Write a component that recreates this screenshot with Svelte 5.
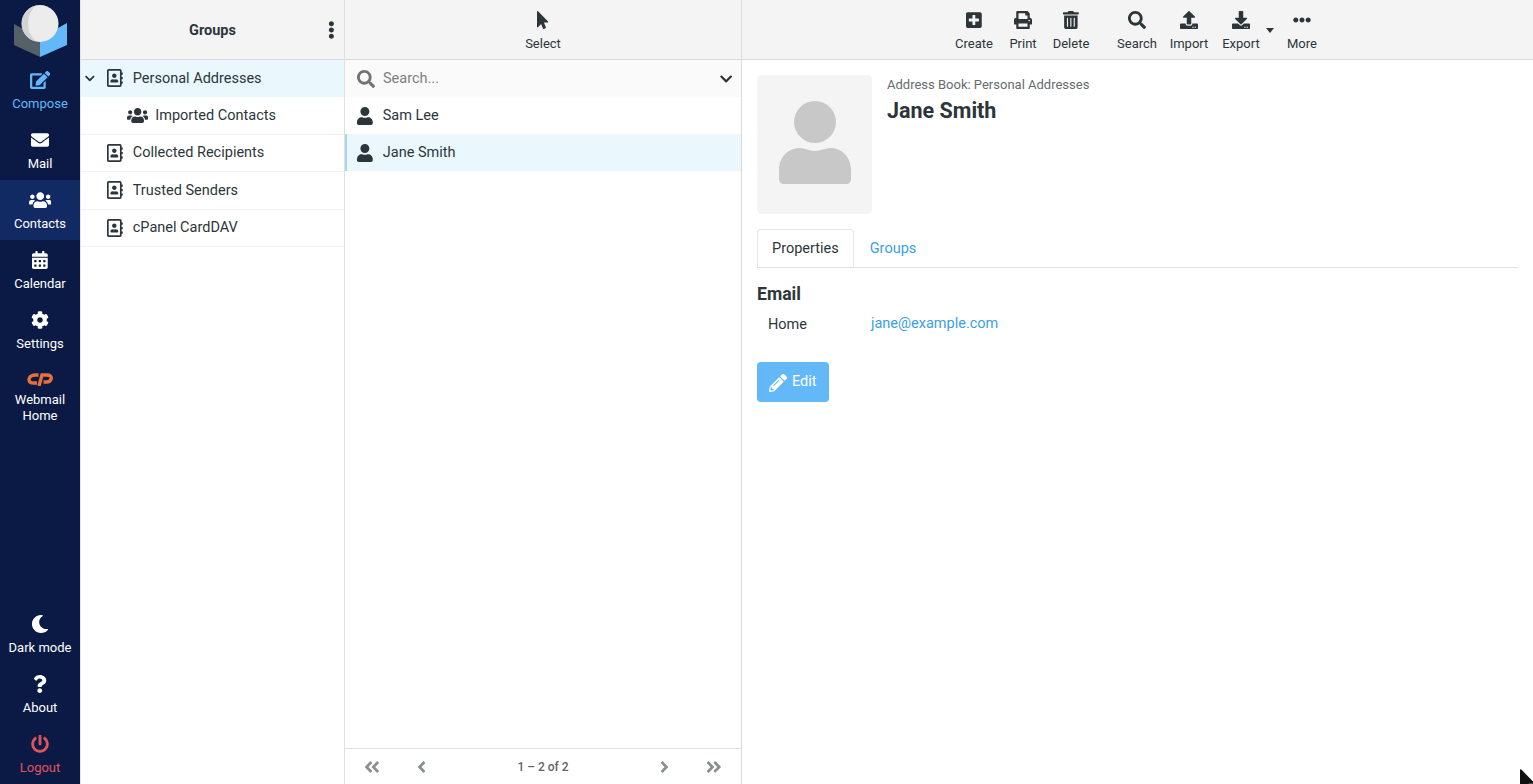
<script>
	// font awesome 5 solid paths, same set the elastic skin uses
	const icons = {
		edit: ['0 0 576 512', 'M402.6 83.2l90.2 90.2c3.8 3.8 3.8 10 0 13.8L274.4 405.6l-92.8 10.3c-12.4 1.4-22.9-9.1-21.5-21.5l10.3-92.8L388.8 83.2c3.8-3.8 10-3.8 13.8 0zm162-22.9l-48.8-48.8c-15.2-15.2-39.9-15.2-55.2 0l-35.4 35.4c-3.8 3.8-3.8 10 0 13.8l90.2 90.2c3.8 3.8 10 3.8 13.8 0l35.4-35.4c15.2-15.3 15.2-40 0-55.2zM384 346.2V448H64V128h229.8c3.2 0 6.2-1.3 8.5-3.5l40-40c7.6-7.6 2.2-20.5-8.5-20.5H48C21.5 64 0 85.5 0 112v352c0 26.5 21.5 48 48 48h352c26.5 0 48-21.5 48-48V306.2c0-10.7-12.9-16-20.5-8.5l-40 40c-2.2 2.3-3.5 5.3-3.5 8.5z'],
		envelope: ['0 0 512 512', 'M502.3 190.8c3.9-3.1 9.7-.2 9.7 4.7V400c0 26.5-21.5 48-48 48H48c-26.5 0-48-21.5-48-48V195.6c0-5 5.7-7.8 9.7-4.7 22.4 17.4 52.1 39.5 154.1 113.6 21.1 15.4 56.7 47.8 92.2 47.6 35.7.3 72-32.8 92.3-47.6 102-74.1 131.6-96.3 154-113.7zM256 320c23.2.4 56.6-29.2 73.4-41.4 132.7-96.3 142.8-104.7 173.4-128.7 5.8-4.5 9.2-11.5 9.2-18.9v-19c0-26.5-21.5-48-48-48H48C21.5 64 0 85.5 0 112v19c0 7.4 3.4 14.3 9.2 18.9 30.6 23.9 40.7 32.4 173.4 128.7 16.8 12.2 50.2 41.8 73.4 41.4z'],
		users: ['0 0 640 512', 'M96 224c35.3 0 64-28.7 64-64s-28.7-64-64-64-64 28.7-64 64 28.7 64 64 64zm448 0c35.3 0 64-28.7 64-64s-28.7-64-64-64-64 28.7-64 64 28.7 64 64 64zm32 32h-64c-17.6 0-33.5 7.1-45.1 18.6 40.3 22.1 68.9 62 75.1 109.4h66c17.7 0 32-14.3 32-32v-32c0-35.3-28.7-64-64-64zm-256 0c61.9 0 112-50.1 112-112S381.9 32 320 32 208 82.1 208 144s50.1 112 112 112zm76.8 32h-8.3c-20.8 10-43.9 16-68.5 16s-47.6-6-68.5-16h-8.3C179.6 288 128 339.6 128 403.2V432c0 26.5 21.5 48 48 48h288c26.5 0 48-21.5 48-48v-28.8c0-63.6-51.6-115.2-115.2-115.2zm-223.7-13.4C161.5 263.1 145.6 256 128 256H64c-35.3 0-64 28.7-64 64v32c0 17.7 14.3 32 32 32h65.9c6.3-47.4 34.9-87.3 75.2-109.4z'],
		calendar: ['0 0 448 512', 'M0 464c0 26.5 21.5 48 48 48h352c26.5 0 48-21.5 48-48V192H0v272zm320-196c0-6.6 5.4-12 12-12h40c6.6 0 12 5.4 12 12v40c0 6.6-5.4 12-12 12h-40c-6.6 0-12-5.4-12-12v-40zm0 128c0-6.6 5.4-12 12-12h40c6.6 0 12 5.4 12 12v40c0 6.6-5.4 12-12 12h-40c-6.6 0-12-5.4-12-12v-40zM192 268c0-6.6 5.4-12 12-12h40c6.6 0 12 5.4 12 12v40c0 6.6-5.4 12-12 12h-40c-6.6 0-12-5.4-12-12v-40zm0 128c0-6.6 5.4-12 12-12h40c6.6 0 12 5.4 12 12v40c0 6.6-5.4 12-12 12h-40c-6.6 0-12-5.4-12-12v-40zM64 268c0-6.6 5.4-12 12-12h40c6.6 0 12 5.4 12 12v40c0 6.6-5.4 12-12 12H76c-6.6 0-12-5.4-12-12v-40zm0 128c0-6.6 5.4-12 12-12h40c6.6 0 12 5.4 12 12v40c0 6.6-5.4 12-12 12H76c-6.6 0-12-5.4-12-12v-40zM400 64h-48V16c0-8.8-7.2-16-16-16h-32c-8.8 0-16 7.2-16 16v48H160V16c0-8.8-7.2-16-16-16h-32c-8.8 0-16 7.2-16 16v48H48C21.5 64 0 85.5 0 112v48h448v-48c0-26.5-21.5-48-48-48z'],
		cog: ['0 0 512 512', 'M487.4 315.7l-42.6-24.6c4.3-23.2 4.3-47 0-70.2l42.6-24.6c4.9-2.8 7.1-8.6 5.5-14-11.1-35.6-30-67.8-54.7-94.6-3.8-4.1-10-5.1-14.8-2.3L380.8 110c-17.9-15.4-38.5-27.3-60.8-35.1V25.8c0-5.6-3.9-10.5-9.4-11.7-36.7-8.2-74.3-7.8-109.2 0-5.5 1.2-9.4 6.1-9.4 11.7V75c-22.2 7.9-42.8 19.8-60.8 35.1L88.7 85.5c-4.9-2.8-11-1.9-14.8 2.3-24.7 26.7-43.6 58.9-54.7 94.6-1.7 5.4.6 11.2 5.5 14L67.3 221c-4.3 23.2-4.3 47 0 70.2l-42.6 24.6c-4.9 2.8-7.1 8.6-5.5 14 11.1 35.6 30 67.8 54.7 94.6 3.8 4.1 10 5.1 14.8 2.3l42.6-24.6c17.9 15.4 38.5 27.3 60.8 35.1v49.2c0 5.6 3.9 10.5 9.4 11.7 36.7 8.2 74.3 7.8 109.2 0 5.5-1.2 9.4-6.1 9.4-11.7v-49.2c22.2-7.9 42.8-19.8 60.8-35.1l42.6 24.6c4.9 2.8 11 1.9 14.8-2.3 24.7-26.7 43.6-58.9 54.7-94.6 1.5-5.5-.7-11.3-5.6-14.1zM256 336c-44.1 0-80-35.9-80-80s35.9-80 80-80 80 35.9 80 80-35.9 80-80 80z'],
		moon: ['0 0 512 512', 'M283.211 512c78.962 0 151.079-35.925 198.857-94.792 7.068-8.708-.639-21.43-11.562-19.35-124.203 23.654-238.262-71.576-238.262-196.954 0-72.222 38.662-138.635 101.498-174.394 9.686-5.512 7.25-20.197-3.756-22.23A258.156 258.156 0 0 0 283.211 0c-141.309 0-256 114.511-256 256 0 141.309 114.511 256 256 256z'],
		question: ['0 0 384 512', 'M202.021 0C122.202 0 70.503 32.703 29.914 91.026c-7.363 10.58-5.093 25.086 5.178 32.874l43.138 32.709c10.373 7.865 25.132 6.026 33.253-4.148 25.049-31.381 43.63-49.449 82.757-49.449 30.764 0 68.816 19.799 68.816 49.631 0 22.552-18.617 34.134-48.993 51.164-35.423 19.86-82.299 44.576-82.299 106.405V320c0 13.255 10.745 24 24 24h72.471c13.255 0 24-10.745 24-24v-5.773c0-42.86 125.268-44.645 125.268-160.627C377.504 66.256 286.902 0 202.021 0zM192 373.459c-38.196 0-69.271 31.075-69.271 69.271 0 38.195 31.075 69.27 69.271 69.27s69.271-31.075 69.271-69.271-31.075-69.27-69.271-69.27z'],
		power: ['0 0 512 512', 'M400 54.1c63 45 104 118.6 104 201.9 0 136.8-110.8 247.7-247.5 248C120 504.3 8.2 393 8 256.4 7.9 173.1 48.9 99.3 111.8 54.2c11.7-8.3 28-4.8 35 7.7L162.6 90c5.9 10.5 3.1 23.8-6.6 31-41.5 30.8-68 79.6-68 134.9-.1 92.3 74.5 168.1 168 168.1 91.6 0 168.6-74.2 168-169.1-.3-51.8-24.7-101.8-68.1-134-9.7-7.2-12.4-20.5-6.5-30.9l15.8-28.1c7-12.4 23.2-16.1 34.8-7.8zM296 264V24c0-13.3-10.7-24-24-24h-32c-13.3 0-24 10.7-24 24v240c0 13.3 10.7 24 24 24h32c13.3 0 24-10.7 24-24z'],
		pointer: ['0 0 320 512', 'M302.189 329.126H196.105l55.831 135.993c3.889 9.428-.555 19.999-9.444 23.999l-49.165 21.427c-9.165 4-19.443-.571-23.332-9.714l-53.053-129.136-86.664 89.138C18.729 472.71 0 463.554 0 447.977V18.299C0 1.899 19.921-6.096 30.277 5.443l284.412 292.542c11.472 11.179 3.007 31.141-12.5 31.141z'],
		plus: ['0 0 448 512', 'M400 32H48C21.5 32 0 53.5 0 80v352c0 26.5 21.5 48 48 48h352c26.5 0 48-21.5 48-48V80c0-26.5-21.5-48-48-48zm-32 252c0 6.6-5.4 12-12 12h-92v92c0 6.6-5.4 12-12 12h-56c-6.6 0-12-5.4-12-12v-92H92c-6.6 0-12-5.4-12-12v-56c0-6.6 5.4-12 12-12h92v-92c0-6.6 5.4-12 12-12h56c6.6 0 12 5.4 12 12v92h92c6.6 0 12 5.4 12 12v56z'],
		print: ['0 0 512 512', 'M448 192V77.25c0-8.49-3.37-16.62-9.37-22.63L393.37 9.37c-6-6-14.14-9.37-22.63-9.37H96C78.33 0 64 14.33 64 32v160c-35.35 0-64 28.65-64 64v112c0 8.84 7.16 16 16 16h48v96c0 17.67 14.33 32 32 32h320c17.67 0 32-14.33 32-32v-96h48c8.84 0 16-7.16 16-16V256c0-35.35-28.65-64-64-64zm-64 256H128v-96h256v96zm0-224H128V64h192v48c0 8.84 7.16 16 16 16h48v96zm48 72c-13.25 0-24-10.75-24-24 0-13.26 10.75-24 24-24s24 10.74 24 24c0 13.25-10.75 24-24 24z'],
		trash: ['0 0 448 512', 'M32 464a48 48 0 0 0 48 48h288a48 48 0 0 0 48-48V128H32zm272-256a16 16 0 0 1 32 0v224a16 16 0 0 1-32 0zm-96 0a16 16 0 0 1 32 0v224a16 16 0 0 1-32 0zm-96 0a16 16 0 0 1 32 0v224a16 16 0 0 1-32 0zM432 32H312l-9.4-18.7A24 24 0 0 0 281.1 0H166.8a23.72 23.72 0 0 0-21.4 13.3L136 32H16A16 16 0 0 0 0 48v32a16 16 0 0 0 16 16h416a16 16 0 0 0 16-16V48a16 16 0 0 0-16-16z'],
		search: ['0 0 512 512', 'M505 442.7L405.3 343c-4.5-4.5-10.6-7-17-7H372c27.6-35.3 44-79.7 44-128C416 93.1 322.9 0 208 0S0 93.1 0 208s93.1 208 208 208c48.3 0 92.7-16.4 128-44v16.3c0 6.4 2.5 12.5 7 17l99.7 99.7c9.4 9.4 24.6 9.4 33.9 0l28.3-28.3c9.4-9.4 9.4-24.6.1-34zM208 336c-70.7 0-128-57.2-128-128 0-70.7 57.2-128 128-128 70.7 0 128 57.2 128 128 0 70.7-57.2 128-128 128z'],
		upload: ['0 0 512 512', 'M296 384h-80c-13.3 0-24-10.7-24-24V192h-87.7c-17.8 0-26.7-21.5-14.1-34.1L242.3 5.7c7.5-7.5 19.8-7.5 27.3 0l152.2 152.2c12.6 12.6 3.7 34.1-14.1 34.1H320v168c0 13.3-10.7 24-24 24zm216-8v112c0 13.3-10.7 24-24 24H24c-13.3 0-24-10.7-24-24V376c0-13.3 10.7-24 24-24h136v8c0 30.9 25.1 56 56 56h80c30.9 0 56-25.1 56-56v-8h136c13.3 0 24 10.7 24 24zm-124 88c0-11-9-20-20-20s-20 9-20 20 9 20 20 20 20-9 20-20zm64 0c0-11-9-20-20-20s-20 9-20 20 9 20 20 20 20-9 20-20z'],
		download: ['0 0 512 512', 'M216 0h80c13.3 0 24 10.7 24 24v168h87.7c17.8 0 26.7 21.5 14.1 34.1L269.7 378.3c-7.5 7.5-19.8 7.5-27.3 0L90.1 226.1c-12.6-12.6-3.7-34.1 14.1-34.1H192V24c0-13.3 10.7-24 24-24zm296 376v112c0 13.3-10.7 24-24 24H24c-13.3 0-24-10.7-24-24V376c0-13.3 10.7-24 24-24h146.7l49 49c20.1 20.1 52.5 20.1 72.6 0l49-49H488c13.3 0 24 10.7 24 24zm-124 88c0-11-9-20-20-20s-20 9-20 20 9 20 20 20 20-9 20-20zm64 0c0-11-9-20-20-20s-20 9-20 20 9 20 20 20 20-9 20-20z'],
		dots: ['0 0 512 512', 'M328 256c0 39.8-32.2 72-72 72s-72-32.2-72-72 32.2-72 72-72 72 32.2 72 72zm104-72c-39.8 0-72 32.2-72 72s32.2 72 72 72 72-32.2 72-72-32.2-72-72-72zm-352 0c-39.8 0-72 32.2-72 72s32.2 72 72 72 72-32.2 72-72-32.2-72-72-72z'],
		dotsv: ['0 0 192 512', 'M96 184c39.8 0 72 32.2 72 72s-32.2 72-72 72-72-32.2-72-72 32.2-72 72-72zM24 80c0 39.8 32.2 72 72 72s72-32.2 72-72S135.8 8 96 8 24 40.2 24 80zm0 352c0 39.8 32.2 72 72 72s72-32.2 72-72-32.2-72-72-72-72 32.2-72 72z'],
		user: ['0 0 448 512', 'M224 256c70.7 0 128-57.3 128-128S294.7 0 224 0 96 57.3 96 128s57.3 128 128 128zm89.6 32h-16.7c-22.2 10.2-46.9 16-72.9 16s-50.6-5.8-72.9-16h-16.7C60.2 288 0 348.2 0 422.4V464c0 26.5 21.5 48 48 48h352c26.5 0 48-21.5 48-48v-41.6c0-74.2-60.2-134.4-134.4-134.4z'],
		chevron: ['0 0 448 512', 'M207.029 381.476L12.686 187.132c-9.373-9.373-9.373-24.569 0-33.941l22.667-22.667c9.357-9.357 24.522-9.375 33.901-.04L224 284.505l154.745-154.021c9.379-9.335 24.544-9.317 33.901.04l22.667 22.667c9.373 9.373 9.373 24.569 0 33.941L240.971 381.476c-9.373 9.372-24.569 9.372-33.942 0z'],
		left: ['0 0 256 512', 'M31.7 239l136-136c9.4-9.4 24.6-9.4 33.9 0l22.6 22.6c9.4 9.4 9.4 24.6 0 33.9L127.9 256l96.4 96.4c9.4 9.4 9.4 24.6 0 33.9L201.7 409c-9.4 9.4-24.6 9.4-33.9 0l-136-136c-9.5-9.4-9.5-24.6-.1-34z'],
		right: ['0 0 256 512', 'M224.3 273l-136 136c-9.4 9.4-24.6 9.4-33.9 0l-22.6-22.6c-9.4-9.4-9.4-24.6 0-33.9l96.4-96.4-96.4-96.4c-9.4-9.4-9.4-24.6 0-33.9L54.3 103c9.4-9.4 24.6-9.4 33.9 0l136 136c9.5 9.4 9.5 24.6.1 34z'],
		first: ['0 0 448 512', 'M223.7 239l136-136c9.4-9.4 24.6-9.4 33.9 0l22.6 22.6c9.4 9.4 9.4 24.6 0 33.9L319.9 256l96.4 96.4c9.4 9.4 9.4 24.6 0 33.9L393.7 409c-9.4 9.4-24.6 9.4-33.9 0l-136-136c-9.5-9.4-9.5-24.6-.1-34zm-192 34l136 136c9.4 9.4 24.6 9.4 33.9 0l22.6-22.6c9.4-9.4 9.4-24.6 0-33.9L127.9 256l96.4-96.4c9.4-9.4 9.4-24.6 0-33.9L201.7 103c-9.4-9.4-24.6-9.4-33.9 0l-136 136c-9.5 9.4-9.5 24.6-.1 34z'],
		last: ['0 0 448 512', 'M224.3 273l-136 136c-9.4 9.4-24.6 9.4-33.9 0l-22.6-22.6c-9.4-9.4-9.4-24.6 0-33.9l96.4-96.4-96.4-96.4c-9.4-9.4-9.4-24.6 0-33.9L54.3 103c9.4-9.4 24.6-9.4 33.9 0l136 136c9.5 9.4 9.5 24.6.1 34zm192-34l-136-136c-9.4-9.4-24.6-9.4-33.9 0l-22.6 22.6c-9.4 9.4-9.4 24.6 0 33.9l96.4 96.4-96.4 96.4c-9.4 9.4-9.4 24.6 0 33.9l22.6 22.6c9.4 9.4 24.6 9.4 33.9 0l136-136c9.4-9.2 9.4-24.4 0-33.8z'],
		book: ['0 0 448 512', 'M436 160c6.6 0 12-5.4 12-12v-40c0-6.6-5.4-12-12-12h-20V48c0-26.5-21.5-48-48-48H48C21.5 0 0 21.5 0 48v416c0 26.5 21.5 48 48 48h320c26.5 0 48-21.5 48-48v-48h20c6.6 0 12-5.4 12-12v-40c0-6.6-5.4-12-12-12h-20v-64h20c6.6 0 12-5.4 12-12v-40c0-6.6-5.4-12-12-12h-20v-64h20zm-68 304H48V48h320v416zM208 256c35.3 0 64-28.7 64-64s-28.7-64-64-64-64 28.7-64 64 28.7 64 64 64zm-89.6 128h179.2c12.4 0 22.4-8.6 22.4-19.2v-19.2c0-31.8-30.1-57.6-67.2-57.6-10.8 0-18.7 8-44.8 8-26.9 0-33.4-8-44.8-8-37.1 0-67.2 25.8-67.2 57.6v19.2c0 10.6 10 19.2 22.4 19.2z'],
		pencil: ['0 0 512 512', 'M497.9 142.1l-46.1 46.1c-4.7 4.7-12.3 4.7-17 0l-111-111c-4.7-4.7-4.7-12.3 0-17l46.1-46.1c18.7-18.7 49.1-18.7 67.9 0l60.1 60.1c18.8 18.7 18.8 49.1 0 67.9zM284.2 99.8L21.6 362.4.4 483.9c-2.9 16.4 11.4 30.6 27.8 27.8l121.5-21.3 262.6-262.6c4.7-4.7 4.7-12.3 0-17l-111-111c-4.8-4.7-12.4-4.7-17.1 0zM124.1 339.9c-5.5-5.5-5.5-14.3 0-19.8l154-154c5.5-5.5 14.3-5.5 19.8 0s5.5 14.3 0 19.8l-154 154c-5.5 5.5-14.3 5.5-19.8 0zM88 424h48v36.3l-64.5 11.3-31.1-31.1L51.7 376H88v48z']
	};

	const navTop = [
		{ icon: 'edit', label: 'Compose', cls: 'compose' },
		{ icon: 'envelope', label: 'Mail' },
		{ icon: 'users', label: 'Contacts', cls: 'active' },
		{ icon: 'calendar', label: 'Calendar' },
		{ icon: 'cog', label: 'Settings' }
	];
	const navBottom = [
		{ icon: 'moon', label: 'Dark mode' },
		{ icon: 'question', label: 'About' },
		{ icon: 'power', label: 'Logout', cls: 'logout' }
	];
	const books = ['Collected Recipients', 'Trusted Senders', 'cPanel CardDAV'];
	const contacts = [
		{ name: 'Sam Lee', selected: false },
		{ name: 'Jane Smith', selected: true }
	];
	const tools = [
		{ icon: 'plus', label: 'Create', cls: 'w50' },
		{ icon: 'print', label: 'Print', cls: 'w48' },
		{ icon: 'trash', label: 'Delete', cls: 'w48 end' },
		{ icon: 'search', label: 'Search', cls: 'w52' },
		{ icon: 'upload', label: 'Import', cls: 'w52' },
		{ icon: 'download', label: 'Export', cls: 'w52 pop', drop: true },
		{ icon: 'dots', label: 'More', cls: 'w52' }
	];
</script>

{#snippet icon(name, cls = '')}
	<svg class="ico {cls}" viewBox={icons[name][0]} aria-hidden="true"><path d={icons[name][1]} /></svg>
{/snippet}

<div class="layout">
	<nav class="menu">
		<div class="logo">
			<svg viewBox="0 0 54 54" width="54" height="54">
				<path d="M0 20 L26 34 L26 53 L0 41Z" fill="#566067" />
				<path d="M26 34 L53 19 L53 41 L26 53Z" fill="#63b8f8" />
				<circle cx="26" cy="19.5" r="18.5" fill="#ececec" />
				<path d="M22 1.5 A18.5 18.5 0 0 0 22 37.5 Q14 30 14 19.5 Q14 9 22 1.5Z" fill="#d3d3d3" />
			</svg>
		</div>
		{#each navTop as item}
			<a class="nav-item {item.cls || ''}" href="#top">
				{@render icon(item.icon, 'nav-ico')}
				<span>{item.label}</span>
			</a>
		{/each}
		<a class="nav-item cp" href="#top">
			<svg viewBox="0 0 26 14" width="26" height="14" aria-hidden="true">
				<path d="M11.5 3H8C4.5 3 2 5 2 7.4 2 9.6 4 11 7 11H10" fill="none" stroke="#e8703a" stroke-width="3.4" />
				<path d="M12 14 15 3H20C23 3 24.6 4.6 24.2 6.6 23.8 8.8 21.8 10 19.5 10H16.5" fill="none" stroke="#e8703a" stroke-width="3.4" />
			</svg>
			<span>Webmail<br />Home</span>
		</a>
		<div class="spacer"></div>
		{#each navBottom as item}
			<a class="nav-item {item.cls || ''}" href="#top">
				{@render icon(item.icon, 'nav-ico')}
				<span>{item.label}</span>
			</a>
		{/each}
	</nav>

	<aside class="groups">
		<header class="bar groups-bar">
			<h2>Groups</h2>
			<span class="more-v">{@render icon('dotsv')}</span>
		</header>
		<ul>
			<li class="selected">
				<span class="caret">{@render icon('chevron')}</span>
				{@render icon('book', 'book')}
				<span>Personal Addresses</span>
			</li>
			<li class="sub">
				{@render icon('users', 'sub-ico')}
				<span>Imported Contacts</span>
			</li>
			{#each books as book}
				<li>
					{@render icon('book', 'book')}
					<span>{book}</span>
				</li>
			{/each}
		</ul>
	</aside>

	<section class="list">
		<header class="bar list-bar">
			<div class="tool">
				{@render icon('pointer', 'tool-ico')}
				<span>Select</span>
			</div>
		</header>
		<div class="searchbar">
			{@render icon('search', 'search-ico')}
			<span class="placeholder">Search...</span>
			{@render icon('chevron', 'search-open')}
		</div>
		<ul class="contacts">
			{#each contacts as c}
				<li class:current={c.selected}>
					{@render icon('user', 'user-ico')}
					<span>{c.name}</span>
				</li>
			{/each}
		</ul>
		<footer class="pager">
			<span class="pg p1">{@render icon('first')}</span>
			<span class="pg p2">{@render icon('left')}</span>
			<span class="count">1 – 2 of 2</span>
			<span class="pg p2">{@render icon('right')}</span>
			<span class="pg p1">{@render icon('last')}</span>
		</footer>
	</section>

	<main class="content">
		<header class="bar toolbar">
			{#each tools as t}
				<div class="tool {t.cls}">
					{@render icon(t.icon, 'tool-ico')}
					<span>{t.label}</span>
					{#if t.drop}<i class="drop"></i>{/if}
				</div>
			{/each}
		</header>
		<div class="card">
			<div class="head">
				<div class="photo">
					<svg viewBox="0 0 72 84" width="72" height="84">
						<circle cx="36" cy="21" r="21" fill="#c8c8c8" />
						<path d="M0 78V69C0 55 10 47 21 47 26 47 30 50 36 50 42 50 46 47 51 47 62 47 72 55 72 69V78C72 81 70 83 67 83H5C2 83 0 81 0 78Z" fill="#c8c8c8" />
					</svg>
				</div>
				<div class="names">
					<div class="source">Address Book: Personal Addresses</div>
					<h1>Jane Smith</h1>
				</div>
			</div>
			<div class="tabs">
				<span class="tab on">Properties</span>
				<span class="tab">Groups</span>
			</div>
			<h3>Email</h3>
			<div class="prop">
				<span class="prop-label">Home</span>
				<a class="mail" href="#top">jane@example.com</a>
			</div>
			<button class="edit" type="button">{@render icon('pencil')}Edit</button>
		</div>
	</main>

	<svg class="cursor" viewBox="0 0 320 512" aria-hidden="true"><path d={icons.pointer[1]} /></svg>
</div>

<style>
	:global(body) {
		margin: 0;
		font-family: Roboto, "Liberation Sans", sans-serif;
		color: #2c363a;
		background: #fff;
		overflow: hidden;
	}
	.layout {
		display: grid;
		grid-template-columns: 81px 264px 397px 1fr;
		height: 784px;
		position: relative;
		overflow: hidden;
		font-size: 14.5px;
	}
	ul { list-style: none; margin: 0; padding: 0; }
	.ico { display: block; fill: currentColor; height: 1em; }

	.menu {
		background: #0a1a45;
		border-right: 1px solid #e4e4e4;
		display: flex;
		flex-direction: column;
		box-sizing: border-box;
	}
	.logo { height: 60px; box-sizing: border-box; padding: 4px 0 0 14px; }
	.logo svg { display: block; }
	.nav-item {
		display: flex;
		flex-direction: column;
		align-items: center;
		height: 60px;
		box-sizing: border-box;
		padding-top: 11px;
		color: #fff;
		text-decoration: none;
		font-size: 13px;
		line-height: 16px;
		text-align: center;
	}
	.nav-item :global(.nav-ico) { height: 18px; margin-bottom: 7px; width: auto; }
	.compose { color: #63b8f8; }
	.active { background: #122a63; }
	.logout { color: #e0555a; }
	.cp { height: 76px; padding-top: 12px; }
	.cp svg { margin-bottom: 6px; }
	.spacer { flex: 1; }

	.bar {
		height: 60px;
		box-sizing: border-box;
		background: #f4f4f4;
		border-bottom: 1px solid #d9dcdd;
	}
	.groups { border-right: 1px solid #e0e0e0; }
	.groups-bar { display: flex; align-items: center; justify-content: center; position: relative; padding-top: 1px; }
	h2 { margin: 0; font-size: 14.5px; font-weight: 700; }
	.more-v { position: absolute; right: 9px; top: 21px; font-size: 18px; }
	.groups li {
		height: 37.4px;
		box-sizing: border-box;
		display: flex;
		align-items: center;
		padding-left: 26px;
		border-bottom: 1px solid #f0f0f0;
		position: relative;
	}
	.groups li.selected { background: #eaf8fe; border-bottom-color: #eaf8fe; }
	.groups li.sub { padding-left: 46px; }
	.caret { position: absolute; left: 4px; top: 13px; font-size: 11px; }
	.groups li :global(.book) { height: 18px; width: auto; margin-right: 10px; }
	.groups li :global(.sub-ico) { height: 17px; width: auto; margin-right: 7px; }

	.list {
		border-right: 1px solid #d9dcdd;
		display: flex;
		flex-direction: column;
	}
	.list-bar { display: flex; justify-content: center; }
	.tool {
		display: flex;
		flex-direction: column;
		align-items: center;
		padding-top: 11px;
		font-size: 13px;
		line-height: 16px;
		position: relative;
	}
	.tool :global(.tool-ico) { height: 18px; width: auto; margin-bottom: 7px; }
	.searchbar {
		height: 37px;
		display: flex;
		align-items: center;
		padding: 0 9px 0 12px;
		background: #fafafa;
		box-sizing: border-box;
	}
	.searchbar :global(.search-ico) { height: 18px; color: #6f7476; margin-right: 8px; }
	.placeholder { flex: 1; color: #7b8083; }
	.searchbar :global(.search-open) { height: 14px; width: auto; }
	.contacts { flex: 1; }
	.contacts li {
		height: 37px;
		box-sizing: border-box;
		display: flex;
		align-items: center;
		padding-left: 12px;
	}
	.contacts li.current {
		background: #eaf8fe;
		border-left: 2px solid #a8d6f5;
		padding-left: 10px;
	}
	.contacts li :global(.user-ico) { height: 18px; width: auto; margin-right: 10px; }
	.pager {
		height: 36px;
		box-sizing: border-box;
		border-top: 1px solid #e0e0e0;
		display: flex;
		align-items: center;
		padding: 0 19px;
		color: #898f92;
	}
	.pg { font-size: 18px; display: block; }
	.count {
		flex: 1;
		text-align: center;
		font-size: 12px;
		font-weight: 500;
		color: #5f6466;
	}
	.p1 { width: 15.75px; }
	.p2 { width: 9px; margin: 0 37px; }

	.toolbar { display: flex; justify-content: center; padding-left: 2px; }
	.w48 { width: 48px; }
	.w50 { width: 50px; }
	.w52 { width: 52px; }
	.end { margin-right: 16px; }
	.pop { margin-right: 9px; }
	.drop {
		position: absolute;
		left: calc(100% - 1px);
		top: 28px;
		border: 4px solid transparent;
		border-top: 5px solid #2c363a;
		border-bottom: 0;
	}

	.card { padding: 15px 15px 0; }
	.head { display: flex; gap: 15px; }
	.photo {
		width: 115px;
		height: 139px;
		background: #f4f4f4;
		border-radius: 5px;
		display: flex;
		justify-content: center;
		padding-top: 26px;
		box-sizing: border-box;
	}
	.source { font-size: 13px; color: #666c70; line-height: 20px; }
	h1 { margin: 3px 0 0; font-size: 21.5px; font-weight: 700; line-height: 26px; }
	.tabs {
		margin-top: 15px;
		display: flex;
		border-bottom: 1px solid #dee2e6;
		height: 38px;
		box-sizing: content-box;
	}
	.tab {
		padding: 0 14px;
		line-height: 37px;
		height: 38px;
		box-sizing: border-box;
		color: #3a9fe6;
		border: 1px solid transparent;
	}
	.tab.on {
		color: #2c363a;
		border-color: #e4e6e8;
		border-bottom-color: #fff;
		border-radius: 4px 4px 0 0;
		background: #fff;
	}
	.tab + .tab { margin-left: 1px; }
	h3 { margin: 15px 0 0; font-size: 17.6px; font-weight: 700; line-height: 22px; }
	.prop { display: flex; margin-top: 9px; line-height: 20px; }
	.prop-label { width: 103px; padding-left: 11px; margin-top: 1px; }
	.mail { color: #3a9fe6; text-decoration: none; }
	.edit {
		margin-top: 27px;
		width: 72px;
		height: 40px;
		background: #63b8f8;
		border: 0;
		border-radius: 4px;
		color: #fff;
		font: inherit;
		display: flex;
		align-items: center;
		padding: 0 0 2px 12px;
		gap: 5px;
	}
	.edit :global(.ico) { height: 18px; margin-top: 3px; }
	.cursor {
		position: absolute;
		left: 1520px;
		top: 769px;
		width: 14px;
		height: 23px;
		fill: #111;
	}
</style>
